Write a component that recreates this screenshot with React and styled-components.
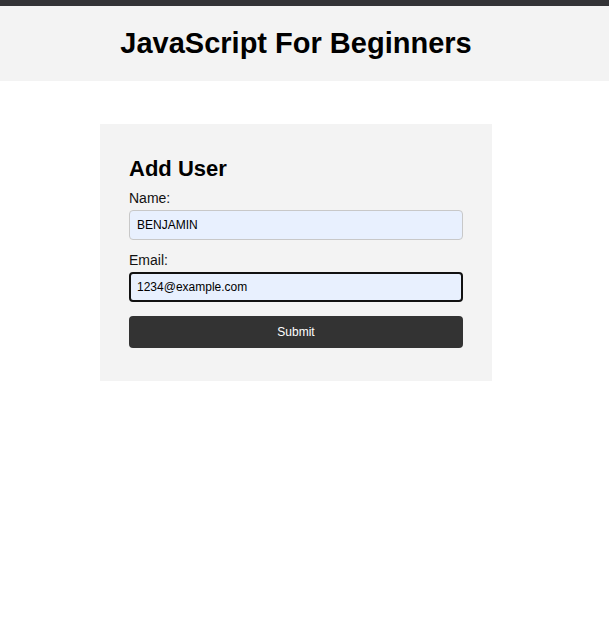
import { useEffect, useRef } from 'react';
import styled, { createGlobalStyle } from 'styled-components';

const GlobalStyle = createGlobalStyle`
  * { box-sizing: border-box; }
  body {
    margin: 0;
    background: #fff;
    font-family: "Liberation Sans", Arial, sans-serif;
  }
`;

function App() {
  const emailRef = useRef(null);

  useEffect(() => {
    const el = emailRef.current;
    if (!el) return;
    el.focus();
    el.setSelectionRange(el.value.length, el.value.length);
  }, []);

  return (
    <>
      <GlobalStyle />
      <TopBar />
      <Header>
        <Title>JavaScript For Beginners</Title>
      </Header>
      <Main>
        <Card>
          <Heading>Add User</Heading>
          <Field>
            <Label>Name:</Label>
            <Input defaultValue="BENJAMIN" />
          </Field>
          <Field>
            <Label>Email:</Label>
            <Input ref={emailRef} defaultValue="1234@example.com" />
          </Field>
          <Btn>Submit</Btn>
        </Card>
      </Main>
    </>
  );
}

export default App;

const TopBar = styled.div`
  height: 6px;
  background: #333336;
`;

const Header = styled.header`
  height: 75px;
  background: #f3f3f3;
  display: flex;
  justify-content: center;
  align-items: center;
  padding-right: 17px;
`;

const Title = styled.h1`
  margin: 0;
  font-size: 29px;
  font-weight: 700;
  color: #000;
`;

const Main = styled.main`
  width: 592px;
  display: flex;
  justify-content: center;
  padding-top: 43px;
`;

const Card = styled.div`
  width: 392px;
  background: #f3f3f3;
  padding: 32px 29px 32px;
  display: flex;
  flex-direction: column;
`;

const Heading = styled.h2`
  margin: 0 0 8px;
  font-size: 22px;
  font-weight: 700;
  color: #000;
`;

const Field = styled.div`
  display: flex;
  flex-direction: column;
  gap: 4px;
  margin-bottom: 12px;

  &:last-of-type {
    margin-bottom: 14px;
  }
`;

const Label = styled.label`
  font-size: 14px;
  color: #111;
`;

const Input = styled.input`
  height: 30px;
  padding: 0 7px;
  font-family: "Liberation Sans", Arial, sans-serif;
  font-size: 12px;
  color: #000;
  background: #e8f0fe;
  border: 1px solid #c8c8c8;
  border-radius: 4px;
  outline: none;

  &:focus {
    border: 2px solid #111;
    padding: 0 6px;
  }
`;

const Btn = styled.button`
  height: 32px;
  margin-bottom: 1px;
  border: none;
  border-radius: 4px;
  background: #333;
  color: #fff;
  font-family: "Liberation Sans", Arial, sans-serif;
  font-size: 12px;
  cursor: pointer;
`;
